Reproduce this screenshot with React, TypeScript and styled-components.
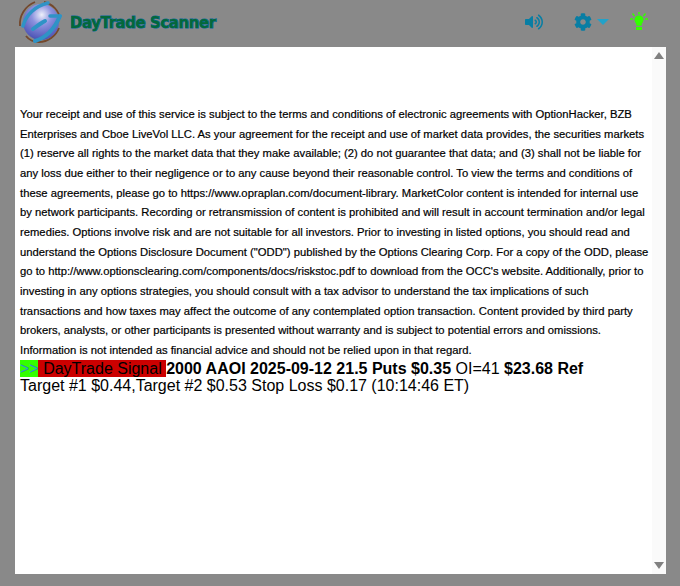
import React from "react";
import styled, { createGlobalStyle } from "styled-components";
import { FaCog, FaVolumeUp } from "react-icons/fa";

const Global = createGlobalStyle`
    html, body {
        margin: 0;
        padding: 0;
        height: 100%;
        background: #898989;
    }
`;

const Page = styled.div`
    width: 680px;
    height: 586px;
    background: #898989;
    font-family: "Liberation Sans", Arial, sans-serif;
    overflow: hidden;
`;

const Header = styled.header`
    height: 47px;
    display: flex;
    align-items: center;
    padding-left: 17px;
`;

const Brand = styled.div`
    display: flex;
    align-items: center;
    gap: 8px;
    margin-top: -2px;
    margin-right: auto;
`;

const BrandName = styled.span`
    font-family: "DejaVu Sans", sans-serif;
    font-size: 15px;
    font-weight: 700;
    letter-spacing: -0.45px;
    color: #03683a;
    -webkit-text-stroke: 1px #07679a;
    paint-order: stroke fill;
`;

const Tools = styled.div`
    display: flex;
    align-items: center;
    margin-top: -3px;
    color: #087ea4;
`;

const Sound = styled(FaVolumeUp)`
    width: 18px;
    height: 16px;
    margin-right: 31px;
`;

const Gear = styled(FaCog)`
    width: 18px;
    height: 18px;
    margin-right: 5px;
`;

const Caret = styled.span`
    width: 0;
    height: 0;
    border-left: 6px solid transparent;
    border-right: 6px solid transparent;
    border-top: 6px solid #22a2c9;
    margin-right: 21px;
`;

const Bulb = styled.svg`
    width: 18px;
    height: 20px;
    margin-right: 32px;
`;

const Panel = styled.main`
    width: 651px;
    height: 527px;
    margin-left: 15px;
    background: #fff;
    display: flex;
`;

const Content = styled.div`
    flex: 1;
    min-width: 0;
    padding: 58px 2px 0 5px;
    color: #000;
`;

const Notice = styled.p`
    margin: 0;
    font-size: 11.25px;
    line-height: 19.67px;
    color: #000;
    -webkit-text-stroke: 0.2px #000;
`;

const Signal = styled.div`
    font-size: 16px;
    line-height: 17px;
    margin-top: -1px;
    width: 590px;
`;

const Arrows = styled.span`
    background: #33ff00;
    color: #2a8fd0;
`;

const Tag = styled.span`
    background: #cc0000;
    color: #000;
    margin-left: -1px;
    padding-left: 1px;
`;

const Scrollbar = styled.aside`
    width: 14px;
    background: #fafafa;
    display: flex;
    flex-direction: column;
    justify-content: space-between;
    align-items: center;
    padding: 5px 0;
    box-sizing: border-box;
`;

const Arrow = styled.span<{ $down?: boolean }>`
    width: 0;
    height: 0;
    border-left: 5px solid transparent;
    border-right: 5px solid transparent;
    ${(p) =>
        p.$down
            ? "border-top: 7px solid #808080;"
            : "border-bottom: 7px solid #808080;"}
`;

const notice = `Your receipt and use of this service is subject to the terms and conditions of electronic agreements with OptionHacker, BZB Enterprises and Cboe LiveVol LLC. As your agreement for the receipt and use of market data provides, the securities markets (1) reserve all rights to the market data that they make available; (2) do not guarantee that data; and (3) shall not be liable for any loss due either to their negligence or to any cause beyond their reasonable control. To view the terms and conditions of these agreements, please go to https://www.opraplan.com/document-library. MarketColor content is intended for internal use by network participants. Recording or retransmission of content is prohibited and will result in account termination and/or legal remedies. Options involve risk and are not suitable for all investors. Prior to investing in listed options, you should read and understand the Options Disclosure Document ("ODD") published by the Options Clearing Corp. For a copy of the ODD, please go to http://www.optionsclearing.com/components/docs/riskstoc.pdf to download from the OCC's website. Additionally, prior to investing in any options strategies, you should consult with a tax advisor to understand the tax implications of such transactions and how taxes may affect the outcome of any contemplated option transaction. Content provided by third party brokers, analysts, or other participants is presented without warranty and is subject to potential errors and omissions. Information is not intended as financial advice and should not be relied upon in that regard.`;

const Logo = () => (
    <svg width="45" height="45" viewBox="0 0 45 45">
        <defs>
            <radialGradient id="ball" cx="0.52" cy="0.3" r="0.7">
                <stop offset="0" stopColor="#eef0fb" />
                <stop offset="0.4" stopColor="#8d92de" />
                <stop offset="1" stopColor="#4b52b4" />
            </radialGradient>
        </defs>
        <circle cx="24" cy="22" r="18" fill="url(#ball)" />
        <path d="M3 26C2 16 8 6 18 2M27 2c9 2 15 9 16 17M42 28c-3 8-11 14-20 14-6 0-10-2-13-6" fill="none" stroke="#74482c" strokeWidth="1.8" />
        <g fill="none" stroke="#2f93c6" strokeLinecap="round">
            <path d="M6 26C9 15 18 6 31 3" strokeWidth="3.500" />
            <path d="M16 29c4-3 8-6 12-8" strokeWidth="4" />
            <path d="M18 41c10-3 19-11 25-25" strokeWidth="4" />
            <path d="M33 16h9" strokeWidth="3.500" />
        </g>
    </svg>
);

const App = () => {
    return (
        <Page>
            <Global />
            <Header>
                <Brand>
                    <Logo />
                    <BrandName>DayTrade Scanner</BrandName>
                </Brand>
                <Tools>
                    <Sound />
                    <Gear />
                    <Caret />
                    <Bulb viewBox="0 0 18 20">
                        <g stroke="#33ff00" strokeWidth="1.5" fill="none">
                            <path d="M0 7h3M15 7h3M2.500 1.500l2 2.500M15.500 1.500l-2 2.500M9 0v2.500" />
                        </g>
                        <path d="M9 3.500c3 0 4.500 2 4.500 4.200 0 2.300-2 3.500-2 6h-5c0-2.500-2-3.700-2-6C4.500 5.500 6 3.500 9 3.500z" fill="#33ff00" />
                        <rect x="6" y="15" width="6" height="3" fill="#33ff00" />
                    </Bulb>
                </Tools>
            </Header>
            <Panel>
                <Content>
                    <Notice>{notice}</Notice>
                    <Signal>
                        <Arrows>&gt;&gt;</Arrows>
                        <Tag>&nbsp;DayTrade Signal&nbsp;</Tag>
                        <b>2000 AAOI 2025-09-12 21.5 Puts $0.35 </b>
                        OI=41 <b>$23.68 Ref</b> Target #1 $0.44,Target #2 $0.53 Stop Loss $0.17 (10:14:46 ET)
                    </Signal>
                </Content>
                <Scrollbar>
                    <Arrow />
                    <Arrow $down />
                </Scrollbar>
            </Panel>
        </Page>
    );
};

export default App;
